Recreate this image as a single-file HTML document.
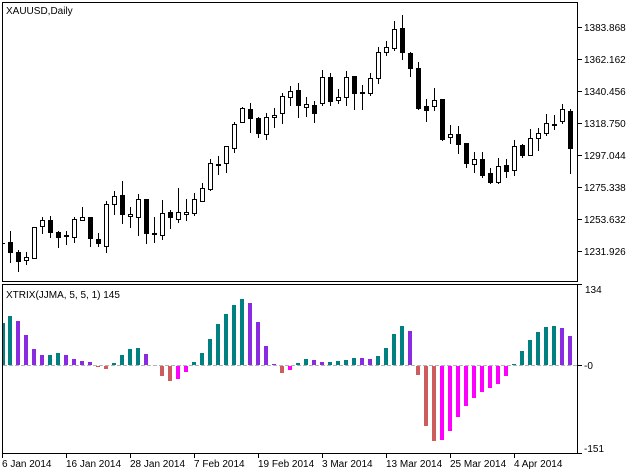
<!DOCTYPE html>
<html><head><meta charset="utf-8"><style>
html,body{margin:0;padding:0;background:#fff;width:635px;height:474px;overflow:hidden}
svg{display:block}
text{font-family:"Liberation Sans",sans-serif;font-size:10px;fill:#000}
</style></head><body>
<svg id="s" width="635" height="474" xmlns="http://www.w3.org/2000/svg" shape-rendering="crispEdges">
<rect x="0" y="0" width="635" height="474" fill="#fff"/>
<rect x="2.5" y="2.5" width="575" height="279" fill="none" stroke="#000"/>
<rect x="2.5" y="284.5" width="575" height="169" fill="none" stroke="#000"/>
<line x1="3" y1="365.5" x2="577" y2="365.5" stroke="#b4b4b4" stroke-dasharray="4,2"/>
<g id="c"></g>
<g id="b"></g>
<text x="6" y="14">XAUUSD,Daily</text>
<text x="6" y="298">XTRIX(JJMA, 5, 5, 1) 145</text>
<g stroke="#000">
<line x1="578" y1="27.5" x2="582" y2="27.5"/><line x1="578" y1="59.5" x2="582" y2="59.5"/>
<line x1="578" y1="91.5" x2="582" y2="91.5"/><line x1="578" y1="123.5" x2="582" y2="123.5"/>
<line x1="578" y1="155.5" x2="582" y2="155.5"/><line x1="578" y1="187.5" x2="582" y2="187.5"/>
<line x1="578" y1="219.5" x2="582" y2="219.5"/><line x1="578" y1="251.5" x2="582" y2="251.5"/>
<line x1="578" y1="284.5" x2="582" y2="284.5"/><line x1="578" y1="365.5" x2="582" y2="365.5"/>
<line x1="578" y1="453.5" x2="582" y2="453.5"/>
<line x1="2.5" y1="454" x2="2.5" y2="458"/><line x1="66.5" y1="454" x2="66.5" y2="458"/>
<line x1="130.5" y1="454" x2="130.5" y2="458"/><line x1="194.5" y1="454" x2="194.5" y2="458"/>
<line x1="258.5" y1="454" x2="258.5" y2="458"/><line x1="322.5" y1="454" x2="322.5" y2="458"/>
<line x1="386.5" y1="454" x2="386.5" y2="458"/><line x1="450.5" y1="454" x2="450.5" y2="458"/>
<line x1="514.5" y1="454" x2="514.5" y2="458"/>
</g>
<text x="584" y="31">1383.868</text><text x="584" y="63">1362.162</text>
<text x="584" y="95">1340.456</text><text x="584" y="127">1318.750</text>
<text x="584" y="159">1297.044</text><text x="584" y="191">1275.338</text>
<text x="584" y="223">1253.632</text><text x="584" y="255">1231.926</text>
<text x="585" y="293">134</text><text x="584" y="369">-0</text><text x="584" y="452">-151</text>
<text x="2" y="467">6 Jan 2014</text><text x="66" y="467">16 Jan 2014</text>
<text x="130" y="467">28 Jan 2014</text><text x="194" y="467">7 Feb 2014</text>
<text x="258" y="467">19 Feb 2014</text><text x="322" y="467">3 Mar 2014</text>
<text x="386" y="467">13 Mar 2014</text><text x="450" y="467">25 Mar 2014</text>
<text x="514" y="467">4 Apr 2014</text>
</svg>
<script>
// type: b=black,w=white,d=dash ; bodyTop, bodyBot, wickTop, wickBot
var C=[
['b',242,252,231,262],['b',252,261,250,271],['w',257,260,252,264],['w',227,258,227,258],
['w',220,226,217,233],['b',220,232,216,237],['b',232,237,231,247],['d',235,235,231,244],
['w',219,237,217,242],['w',217,220,207,220],['b',217,238,217,246],['b',239,243,233,246],
['w',204,246,201,252],['w',196,204,191,214],['b',195,214,181,223],['w',214,216,207,227],
['w',199,217,194,235],['b',199,233,199,243],['d',233,233,217,242],['w',213,235,200,239],
['b',212,217,210,228],['w',212,219,188,222],['w',212,214,199,220],['w',199,213,193,215],
['w',188,201,183,201],['w',163,189,159,190],['d',164,164,156,174],['w',146,163,146,172],
['w',124,148,122,152],['w',108,122,107,122],['b',109,118,103,132],['b',118,133,117,137],
['w',117,134,113,139],['w',115,117,108,127],['w',96,113,93,123],['w',91,97,86,105],
['b',90,105,83,117],['w',104,107,97,116],['b',105,113,101,122],['w',77,103,70,105],
['b',77,101,73,105],['w',97,100,89,103],['w',77,97,71,105],['b',76,93,76,109],
['d',92,92,85,109],['w',78,93,73,95],['w',52,78,47,83],['w',47,52,41,55],
['w',29,48,21,50],['b',28,52,15,59],['b',53,68,52,76],['b',68,108,62,109],
['b',106,110,99,121],['w',100,106,88,110],['b',99,139,99,140],['w',134,137,125,143],
['b',134,144,126,153],['b',143,163,143,167],['w',159,164,152,172],['b',159,175,152,177],
['b',173,182,168,183],['w',166,182,158,183],['b',165,171,159,177],['w',146,170,140,175],
['b',145,155,144,157],['w',138,155,129,155],['w',133,138,128,150],['w',123,133,114,135],
['d',124,124,115,129],['w',109,121,104,123],['b',111,148,109,173]];
var T='#008080',P='#8a2be2',R='#cd5c5c',M='#ff00ff';
var B=[[T,316],[P,321],[P,335],[P,349],[P,355],[T,355],[T,353],[P,355],[P,359],[P,361],[P,362],
[R,366],[R,368],[T,363],[T,355],[T,349],[T,348],[P,354],[null,365],[R,375],[R,380],[M,378],[M,371],
[T,362],[T,353],[T,339],[T,324],[T,314],[T,305],[T,299],[P,303],[P,322],[P,346],[P,364],
[R,372],[M,369],[T,363],[T,359],[P,360],[P,362],[T,362],[T,361],[T,360],[T,358],[P,358],[P,359],
[T,356],[T,348],[T,334],[T,326],[P,331],[R,374],[R,425],[R,440],[M,439],[M,430],[M,416],[M,405],
[M,397],[M,391],[M,387],[M,383],[M,375],[T,364],[T,351],[T,340],[T,332],[T,327],[T,326],[P,328],[P,336]];
var ns='http://www.w3.org/2000/svg';
function el(g,t,a){var e=document.createElementNS(ns,t);for(var k in a)e.setAttribute(k,a[k]);g.appendChild(e);}
var g=document.getElementById('c'),h=document.getElementById('b');
el(g,'rect',{x:3,y:243,width:2,height:1,fill:'#000'});
C.forEach(function(d,k){var c=10+8*k;
 el(g,'rect',{x:c,y:d[3],width:1,height:d[4]-d[3]+1,fill:'#000'});
 if(d[0]=='d'){el(g,'rect',{x:c-2,y:d[1],width:5,height:2,fill:'#000'});}
 else{el(g,'rect',{x:c-2,y:d[1],width:5,height:Math.max(2,d[2]-d[1]+1),fill:'#000'});
  if(d[0]=='w'&&d[2]-d[1]>=2)el(g,'rect',{x:c-1,y:d[1]+1,width:3,height:d[2]-d[1]-1,fill:'#fff'});}
});
el(h,'rect',{x:3,y:323,width:2,height:42,fill:T});
B.forEach(function(d,k){if(!d[0])return;var x=8+8*k,y=d[1];
 if(y<365)el(h,'rect',{x:x,y:y,width:4,height:365-y,fill:d[0]});
 else el(h,'rect',{x:x,y:366,width:4,height:Math.max(1,y-365),fill:d[0]});
});
</script>
</body></html>
